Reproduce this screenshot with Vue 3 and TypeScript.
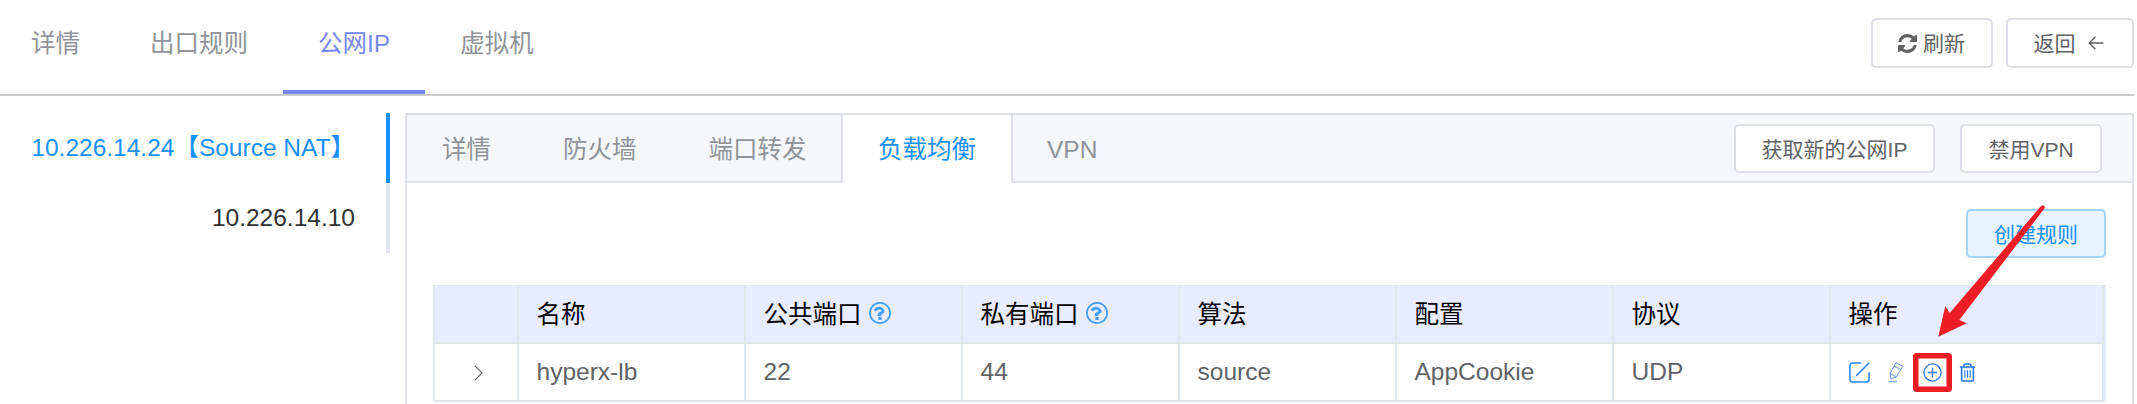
<script setup lang="ts">
interface Tab { label: string; active?: boolean }
interface Column { key: string; title: string; help?: boolean }

const mainTabs: Tab[] = [
  { label: '详情' },
  { label: '出口规则' },
  { label: '公网IP', active: true },
  { label: '虚拟机' },
]
const addresses: Tab[] = [
  { label: '10.226.14.24【Source NAT】', active: true },
  { label: '10.226.14.10' },
]
const subTabs: Tab[] = [
  { label: '详情' },
  { label: '防火墙' },
  { label: '端口转发' },
  { label: '负载均衡', active: true },
  { label: 'VPN' },
]
const columns: Column[] = [
  { key: 'name', title: '名称' },
  { key: 'publicPort', title: '公共端口', help: true },
  { key: 'privatePort', title: '私有端口', help: true },
  { key: 'algorithm', title: '算法' },
  { key: 'config', title: '配置' },
  { key: 'protocol', title: '协议' },
]
const row: Record<string, string> = {
  name: 'hyperx-lb',
  publicPort: '22',
  privatePort: '44',
  algorithm: 'source',
  config: 'AppCookie',
  protocol: 'UDP',
}
</script>

<template>
  <div class="page">
    <header class="top">
      <nav class="main-tabs">
        <a v-for="t in mainTabs" :key="t.label" class="main-tab" :class="{ active: t.active }">{{ t.label }}</a>
      </nav>
      <div class="top-actions">
        <button class="btn refresh">
          <svg class="ic-refresh" viewBox="0 0 1536 1536"><path fill="currentColor" d="M1511 928q0 5-1 7-64 268-268 434.500T764 1536q-146 0-282.500-55T238 1324l-129 129q-19 19-45 19t-45-19-19-45V960q0-26 19-45t45-19h448q26 0 45 19t19 45-19 45l-137 137q71 66 161 102t187 36q134 0 250-65t186-179q11-17 53-117 8-23 30-23h192q13 0 22.500 9.500t9.500 22.500zm25-800v448q0 26-19 45t-45 19h-448q-26 0-45-19t-19-45 19-45l138-138Q969 256 768 256q-134 0-250 65T332 500q-11 17-53 117-8 23-30 23H50q-13 0-22.500-9.500T18 608v-7q65-268 270-434.500T768 0q146 0 284 55.500T1297 212l130-129q19-19 45-19t45 19 19 45z"/></svg>
          <span>刷新</span>
        </button>
        <button class="btn back">
          <span>返回</span>
          <svg class="ic-back" viewBox="0 0 16 14"><path d="M15.500 7H1.200M7.500 .8L1.200 7L7.500 13.200" fill="none" stroke="currentColor" stroke-width="1.400"/></svg>
        </button>
      </div>
    </header>

    <div class="body">
      <aside class="addresses">
        <div v-for="a in addresses" :key="a.label" class="address" :class="{ active: a.active }">{{ a.label }}</div>
      </aside>

      <section class="card">
        <div class="card-head">
          <nav class="sub-tabs">
            <a v-for="t in subTabs" :key="t.label" class="sub-tab" :class="{ active: t.active }">{{ t.label }}</a>
          </nav>
          <div class="card-actions">
            <button class="btn acquire">获取新的公网IP</button>
            <button class="btn disable">禁用VPN</button>
          </div>
        </div>

        <div class="card-body">
          <div class="toolbar"><button class="btn create">创建规则</button></div>
          <div class="table">
            <div class="cell th"></div>
            <div v-for="c in columns" :key="c.key" class="cell th">
              <span>{{ c.title }}</span>
              <svg v-if="c.help" class="ic-help" viewBox="0 0 1536 1536"><path fill="currentColor" d="M880 1072v160q0 14-9 23t-23 9H688q-14 0-23-9t-9-23v-160q0-14 9-23t23-9h160q14 0 23 9t9 23zm208-464q0 50-15 90t-45.500 69-52 44-59.500 36q-32 18-46.500 28t-26 24-11.500 29v32q0 14-9 23t-23 9H640q-14 0-23-9t-9-23v-68q0-35 10.500-64.500t24-47.500 39-35.500 41-25.500 44.500-21q53-25 75-43t22-49q0-42-43.500-71.500T684 535q-56 0-95 27-29 20-80 83-9 12-25 12-11 0-19-6l-108-82q-10-7-12-20t5-23q122-192 349-192 129 0 238.500 89.500T1088 608zM768 128q-130 0-248.500 51t-204 136.500-136.500 204T128 768t51 248.500 136.500 204 204 136.500 248.500 51 248.500-51 204-136.500 136.500-204 51-248.500-51-248.500-136.500-204-204-136.500T768 128zm768 640q0 209-103 385.500T1153.500 1433 768 1536t-385.500-103T103 1153.500 0 768t103-385.500T382.500 103 768 0t385.500 103T1433 382.500 1536 768z"/></svg>
            </div>
            <div class="cell th">操作</div>
            <div class="gutter"></div>

            <div class="cell expand">
              <svg class="ic-chevron" viewBox="0 0 10 18"><path d="M1 1L9 9L1 17" fill="none" stroke="currentColor" stroke-width="1.300"/></svg>
            </div>
            <div v-for="c in columns" :key="c.key" class="cell">{{ row[c.key] }}</div>
            <div class="cell ops">
              <svg class="ic-edit" viewBox="0 0 22 22"><path d="M13 1H4Q1 1 1 4V18Q1 21 4 21H18Q21 21 21 18V10.500M7.500 14.500L21 1" fill="none" stroke="#2d86f0" stroke-width="1.600"/></svg>
              <svg class="ic-pencil" viewBox="0 0 17 22"><path d="M8.500 1.200L15.800 5L8.800 16.200L3.200 18.200L2.200 12.500ZM6.500 4.500L13.600 8.500M2.200 12.500L8.800 16.200M.5 21.300H10" fill="none" stroke="#5d8df0" stroke-width="1"/></svg>
              <span class="plus">
                <svg class="ic-plus" viewBox="0 0 20 20"><path d="M10 1A9 9 0 1 0 10 19A9 9 0 1 0 10 1M10 5V15M5 10H15" fill="none" stroke="#2d7bea" stroke-width="1.400"/></svg>
                <svg class="mark" viewBox="0 0 39 39"><rect x="2.750" y="2.750" width="33.500" height="33.500" rx="1" fill="none" stroke="#ee1c25" stroke-width="5.500"/></svg>
                <svg class="arrow" viewBox="0 0 108 134"><path d="M103 1Q105 -.3 106.500 1.200Q107.200 2.500 106 4L21.300 115L28.700 118.300L.3 131.700L7.300 101L11.700 108Z" fill="#ee1c25"/></svg>
              </span>
              <svg class="ic-trash" viewBox="0 0 17 20"><path d="M.5 4.200H16.500M5 4V2.200Q5 1 6.200 1H10.800Q12 1 12 2.200V4M2.300 4.200V17.500Q2.300 19 3.800 19H13.200Q14.700 19 14.700 17.500V4.200" fill="none" stroke="#2478ec" stroke-width="1.700"/><path d="M5.700 7.500V15.500M8.500 7.500V15.500M11.300 7.500V15.500" fill="none" stroke="#2478ec" stroke-width="1.200"/></svg>
            </div>
            <div class="gutter"></div>
          </div>
        </div>
      </section>
    </div>
  </div>
</template>

<style>
body { margin: 0; background: #fff; overflow: hidden; }
</style>

<style scoped>
.page {
  box-sizing: border-box;
  width: 2134px;
  height: 404px;
  overflow: hidden;
  font-family: "Liberation Sans", "Noto Sans CJK SC", sans-serif;
  font-size: 24.5px;
  color: #606266;
}
.page * { box-sizing: border-box; }
svg { display: block; flex: none; overflow: visible; }
.top {
  display: flex;
  justify-content: space-between;
  height: 96px;
  border-bottom: 2px solid #ccc;
}
.main-tabs { display: flex; margin-left: -4px; }
.main-tab {
  height: 94px;
  padding: 0 35px;
  line-height: 87px;
  color: #909399;
  white-space: nowrap;
}
.main-tab.active { color: #7587f2; border-bottom: 4px solid #7587f2; }
.top-actions { display: flex; gap: 13px; padding-top: 18px; }
.btn {
  display: flex;
  align-items: center;
  justify-content: center;
  height: 49px;
  padding: 0 0 2px;
  font: 21px "Liberation Sans", "Noto Sans CJK SC", sans-serif;
  color: #606266;
  white-space: nowrap;
  background: #fff;
  border: 2px solid #dcdfe6;
  border-radius: 5px;
}
.refresh { width: 122px; height: 50px; gap: 6px; padding-right: 1px; }
.back { width: 128px; height: 50px; gap: 12px; padding-right: 3px; }
.ic-refresh { width: 19px; height: 19px; margin-top: 2px; }
.ic-back { width: 16px; height: 14px; margin-top: 2px; }
.body { display: flex; padding-top: 17px; }
.addresses { width: 390px; }
.address {
  height: 70px;
  padding-right: 31px;
  border-right: 4px solid #dfe4ed;
  line-height: 69px;
  text-align: right;
  color: #303133;
}
.address.active { color: #1890ff; border-color: #1890ff; }
.card {
  width: 1729px;
  height: 300px;
  margin-left: 15px;
  border: 2px solid #dcdfe6;
}
.card-head {
  display: flex;
  justify-content: space-between;
  height: 68px;
  background: linear-gradient(#dfe4ed, #dfe4ed) 0 100% / 100% 2px no-repeat #f5f7fa;
}
.sub-tabs { display: flex; }
.sub-tab {
  height: 68px;
  padding: 0 35px;
  border: solid transparent;
  border-width: 0 1px;
  line-height: 69px;
  color: #909399;
  white-space: nowrap;
}
.sub-tab:first-child { border-left: 0; }
.sub-tab:last-child { padding-left: 33px; }
.sub-tab.active {
  margin-left: -1.500px;
  color: #1890ff;
  background: #fff;
  border-color: #dcdfe6;
  border-width: 0 2px;
}
.card-actions { display: flex; gap: 25px; padding: 9px 30px 0 0; }
.acquire { width: 201px; }
.disable { width: 142px; }
.card-body { padding: 26px 26px 0; }
.toolbar { display: flex; justify-content: flex-end; }
.create {
  width: 140px;
  color: #1890ff;
  background: #e8f4ff;
  border-color: #a3d3ff;
}
.table {
  display: grid;
  grid-template-columns: 84px 227px 217px 217px 217px 217px 217px 273px 2px;
  grid-template-rows: 58px 58px;
  width: 1673px;
  margin-top: 27px;
  border: solid #dfe6ec;
  border-width: 1px 0 0 2px;
}
.cell {
  display: flex;
  align-items: center;
  padding: 0 17.500px 0;
  border: solid #dfe6ec;
  border-width: 0 2px 2px 0;
}
.gutter { background: #e6ebf5; }
.th { padding-bottom: 4px; color: #000; background: #e8ecfe; }
.ic-help { width: 22px; height: 22px; margin: 2px 0 0 7px; color: #409eff; }
.expand { justify-content: center; padding: 2px 0 0 4px; color: #666; }
.ic-chevron { width: 9px; height: 16px; }
.ops { padding-left: 18px; }
.ic-edit { width: 21px; height: 21px; }
.ic-pencil { width: 16px; height: 22px; margin-left: 18px; }
.plus { position: relative; margin-left: 19px; }
.ic-plus { width: 19px; height: 19px; }
.mark { position: absolute; top: -10px; left: -10px; width: 39px; height: 39px; }
.arrow { position: absolute; top: -158px; left: 15px; width: 108px; height: 134px; }
.ic-trash { width: 17px; height: 19px; margin-left: 17px; }
</style>
